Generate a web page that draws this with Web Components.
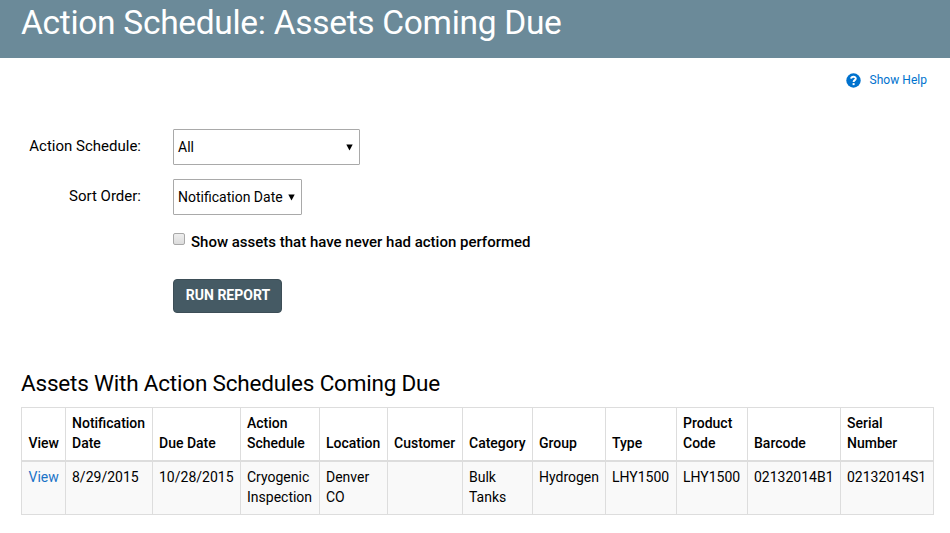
<!DOCTYPE html>
<html lang="en">
<head>
<meta charset="utf-8">
<title>Action Schedule: Assets Coming Due</title>
<style>
  body {
    margin: 0;
    background: #fff;
    color: #000;
    font-family: Roboto, "Liberation Sans", sans-serif;
    font-size: 14px;
    line-height: 20px;
  }
</style>
</head>
<body>
<report-page>
  <page-banner slot="banner">Action Schedule: Assets Coming Due</page-banner>
  <help-link slot="help">Show Help</help-link>
  <form-row label="Action Schedule:"><select-box style="width: 187px">All</select-box></form-row>
  <form-row label="Sort Order:"><select-box style="width: 129px">Notification Date</select-box></form-row>
  <form-row><check-option>Show assets that have never had action performed</check-option></form-row>
  <form-row><action-button>Run Report</action-button></form-row>
  <asset-table slot="results">Assets With Action Schedules Coming Due</asset-table>
</report-page>

<script>
// Attach an open shadow root and fill it with the given markup
class BaseElement extends HTMLElement {
  constructor() {
    super();
    this.attachShadow({ mode: 'open' });
    this.shadowRoot.innerHTML = this.template();
  }
}

class ReportPage extends BaseElement {
  template() {
    return `
      <style>
        :host { display: block; }
        .help { display: flex; justify-content: flex-end; padding: 12px 23px 0 0; }
        .form { display: flex; flex-direction: column; gap: 14px; padding: 39px 0 0 21px; }
        .results { padding: 56px 0 0 21px; }
      </style>
      <slot name="banner"></slot>
      <div class="help"><slot name="help"></slot></div>
      <div class="form"><slot></slot></div>
      <div class="results"><slot name="results"></slot></div>
    `;
  }
}

class PageBanner extends BaseElement {
  template() {
    return `
      <style>
        :host { display: block; height: 58px; background: #6b8a99; color: #fff; }
        h1 {
          margin: 0; padding: 3px 0 0 21px;
          font-size: 33.5px; line-height: 40px; font-weight: 400;
          letter-spacing: -0.3px; white-space: nowrap;
        }
      </style>
      <h1><slot></slot></h1>
    `;
  }
}

class HelpLink extends BaseElement {
  template() {
    return `
      <style>
        :host { display: block; }
        a { display: flex; align-items: center; gap: 9px; color: #0072ce; font-size: 12px; letter-spacing: 0.03px; text-decoration: none; }
      </style>
      <a href="#">
        <svg width="15" height="15" viewBox="0 0 15 15">
          <circle cx="7.5" cy="7.5" r="7.2" fill="#0072ce"/>
          <path d="M5.1 5.7C5.3 3.2 9.8 3.1 9.8 5.6C9.8 7.2 7.6 7.1 7.6 9" fill="none" stroke="#fff" stroke-width="1.9"/>
          <rect x="6.6" y="10.1" width="2" height="2" fill="#fff"/>
        </svg>
        <slot></slot>
      </a>
    `;
  }
}

class FormRow extends BaseElement {
  template() {
    return `
      <style>
        :host { display: flex; align-items: flex-start; gap: 32px; }
        .label { width: 120px; padding-top: 7px; font-size: 15px; text-align: right; white-space: nowrap; }
      </style>
      <div class="label"></div>
      <slot></slot>
    `;
  }

  connectedCallback() {
    this.shadowRoot.querySelector('.label').textContent = this.getAttribute('label') || '';
  }
}

class SelectBox extends BaseElement {
  template() {
    return `
      <style>
        :host {
          display: flex; align-items: center; justify-content: space-between;
          box-sizing: border-box; height: 36px; padding: 0 6px 0 4px;
          border: 1px solid #a9a9a9; border-radius: 1px; white-space: nowrap;
        }
      </style>
      <span><slot></slot></span>
      <svg width="7" height="7" viewBox="0 0 7 7"><path d="M0.3 0.5H6.7L3.5 6.5Z"/></svg>
    `;
  }
}

class CheckOption extends BaseElement {
  template() {
    return `
      <style>
        :host { display: block; height: 36px; }
        label { display: flex; gap: 6px; padding-top: 3px; font-size: 15px; font-weight: 500; white-space: nowrap; }
        .box {
          box-sizing: border-box; width: 12px; height: 12px; margin-top: 1px;
          border: 1px solid #a8a8a8; border-radius: 2px;
          background: linear-gradient(#eee, #dcdcdc);
        }
      </style>
      <label><span class="box"></span><slot></slot></label>
    `;
  }
}

class ActionButton extends BaseElement {
  template() {
    return `
      <style>
        :host { display: block; }
        button {
          display: block; box-sizing: border-box; width: 109px; height: 34px; padding: 0 0 2px 1px;
          border: 1px solid #3d4e57; border-radius: 4px; background: #455a64; color: #fff;
          font: 700 14px Roboto, "Liberation Sans", sans-serif;
          text-transform: uppercase; white-space: nowrap;
        }
      </style>
      <button><slot></slot></button>
    `;
  }
}

const COLUMNS = [
  { title: 'View', width: 45, value: '<a href="#">View</a>' },
  { title: 'Notification<br>Date', width: 87, value: '8/29/2015' },
  { title: 'Due Date', width: 88, value: '10/28/2015' },
  { title: 'Action<br>Schedule', width: 79, value: 'Cryogenic<br>Inspection' },
  { title: 'Location', width: 68, value: 'Denver<br>CO' },
  { title: 'Customer', width: 75, value: '' },
  { title: 'Category', width: 70, value: 'Bulk<br>Tanks' },
  { title: 'Group', width: 73, value: 'Hydrogen' },
  { title: 'Type', width: 71, value: 'LHY1500' },
  { title: 'Product<br>Code', width: 71, value: 'LHY1500' },
  { title: 'Barcode', width: 93, value: '02132014B1' },
  { title: 'Serial<br>Number', width: 93, value: '02132014S1' }
];

class AssetTable extends BaseElement {
  template() {
    return `
      <style>
        :host { display: block; }
        h2 { margin: 0 0 9px; font-size: 22.5px; line-height: 29px; font-weight: 400; letter-spacing: -0.2px; white-space: nowrap; }
        table { width: 913px; table-layout: fixed; border-collapse: separate; border-spacing: 0; border-top: 1px solid #ddd; }
        th, td { box-sizing: border-box; padding: 0 0 0 6px; border-right: 1px solid #ddd; text-align: left; white-space: nowrap; }
        th:first-child, td:first-child { border-left: 1px solid #ddd; padding-left: 6.5px; }
        th { height: 54px; padding-bottom: 7px; border-bottom: 2px solid #ddd; font-weight: 500; vertical-align: bottom; }
        td { height: 53px; padding-top: 5px; border-bottom: 1px solid #ddd; background: #f9f9f9; vertical-align: top; }
        a { color: #1a73c7; text-decoration: none; }
      </style>
      <h2><slot></slot></h2>
      <table>
        <colgroup>${COLUMNS.map(c => `<col style="width: ${c.width}px">`).join('')}</colgroup>
        <thead><tr>${COLUMNS.map(c => `<th>${c.title}</th>`).join('')}</tr></thead>
        <tbody><tr>${COLUMNS.map(c => `<td>${c.value}</td>`).join('')}</tr></tbody>
      </table>
    `;
  }
}

customElements.define('report-page', ReportPage);
customElements.define('page-banner', PageBanner);
customElements.define('help-link', HelpLink);
customElements.define('form-row', FormRow);
customElements.define('select-box', SelectBox);
customElements.define('check-option', CheckOption);
customElements.define('action-button', ActionButton);
customElements.define('asset-table', AssetTable);
</script>
</body>
</html>
